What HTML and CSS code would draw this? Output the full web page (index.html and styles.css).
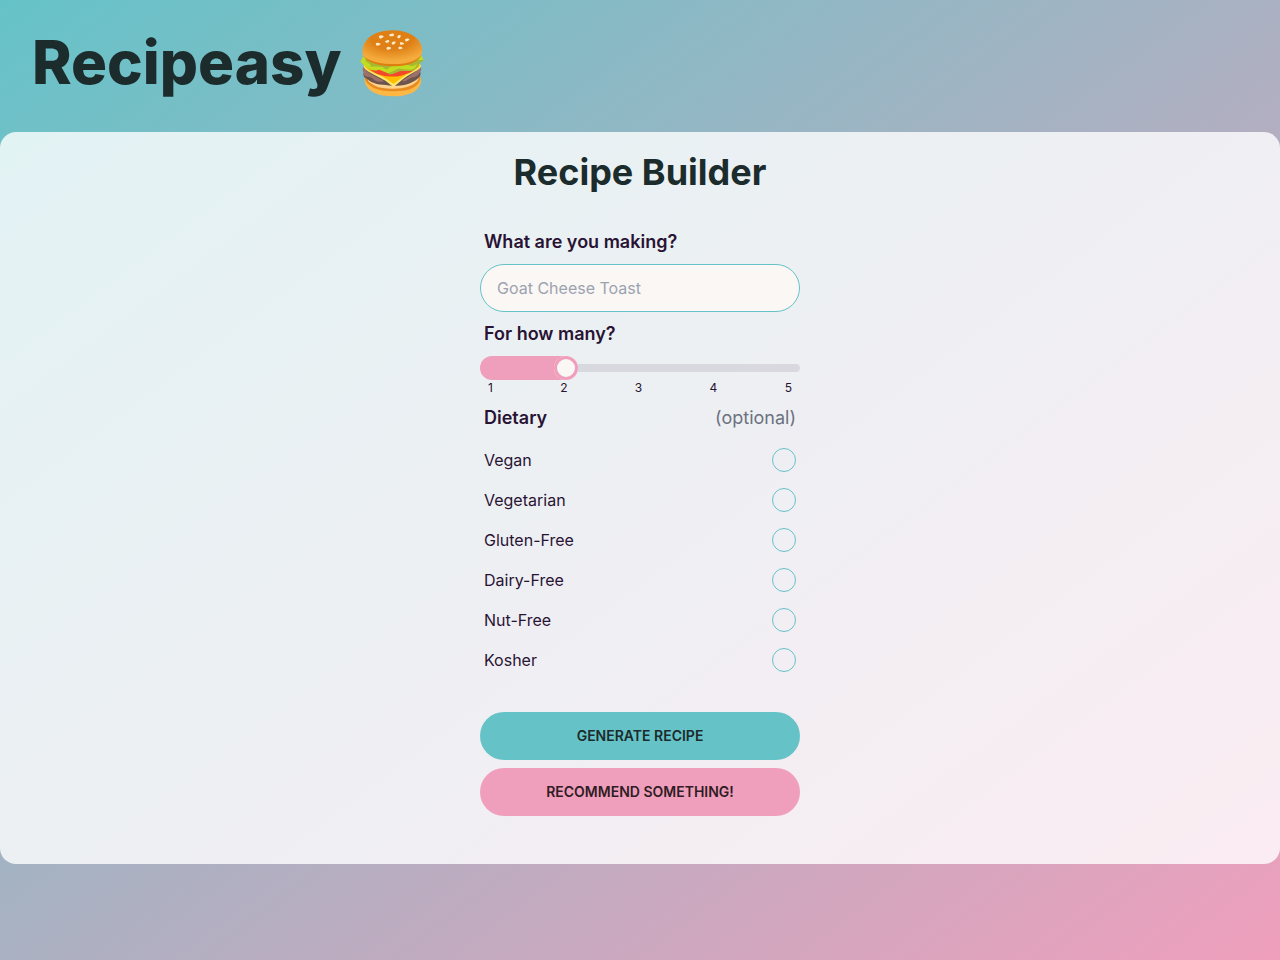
FILE: index.html
```
<!DOCTYPE html>
<html lang="en">
<head>
    <meta charset="UTF-8">
    <meta name="viewport" content="width=device-width, initial-scale=1.0">
    <title>Recipeasy</title>
    <link rel="stylesheet" href="styles.css">
</head>
<body>
<header class="site-header">
    <h1>Recipeasy 🍔</h1>
</header>

<main class="panel">
    <h2>Recipe Builder</h2>

    <form class="recipe-form">
        <label class="field-label" for="dish">What are you making?</label>
        <input class="text-input" type="text" id="dish" name="dish" placeholder="Goat Cheese Toast">

        <label class="field-label" for="servings">For how many?</label>
        <input class="range" type="range" id="servings" name="servings" min="1" max="5" value="2">
        <div class="ticks">
            <span>1</span>
            <span>2</span>
            <span>3</span>
            <span>4</span>
            <span>5</span>
        </div>

        <div class="field-label">
            <span>Dietary</span>
            <span class="optional">(optional)</span>
        </div>
        <label class="option">Vegan <input type="checkbox" name="diet" value="vegan"></label>
        <label class="option">Vegetarian <input type="checkbox" name="diet" value="vegetarian"></label>
        <label class="option">Gluten-Free <input type="checkbox" name="diet" value="gluten-free"></label>
        <label class="option">Dairy-Free <input type="checkbox" name="diet" value="dairy-free"></label>
        <label class="option">Nut-Free <input type="checkbox" name="diet" value="nut-free"></label>
        <label class="option">Kosher <input type="checkbox" name="diet" value="kosher"></label>

        <div class="actions">
            <button class="btn btn-primary" type="submit">Generate Recipe</button>
            <button class="btn btn-secondary" type="button">Recommend Something!</button>
        </div>
    </form>
</main>
</body>
</html>
```

FILE: styles.css
```
:root {
    --primary: #65c3c8;
    --secondary: #ef9fbc;
    --base: #faf7f5;
    --text: #291334;
    --heading: #1c2b2c;
    --muted: #6b7280;
}

* {
    margin: 0;
    padding: 0;
    box-sizing: border-box;
}

body {
    min-height: 100vh;
    font-family: Inter, sans-serif;
    font-size: 16px;
    line-height: 24px;
    color: var(--text);
    background: linear-gradient(to bottom right, var(--primary), var(--secondary));
}

.site-header {
    padding: 32px;
}

.site-header h1 {
    font-size: 60px;
    line-height: 60px;
    font-weight: 800;
    color: var(--heading);
    padding-bottom: 8px;
}

.panel {
    padding: 20px 16px 48px;
    border-radius: 16px;
    background: rgba(255, 255, 255, 0.8);
}

.panel h2 {
    margin-bottom: 32px;
    font-size: 36px;
    line-height: 40px;
    font-weight: 700;
    text-align: center;
    color: var(--heading);
}

.recipe-form {
    display: flex;
    flex-direction: column;
    max-width: 320px;
    margin: 0 auto;
}

.field-label {
    display: flex;
    justify-content: space-between;
    padding: 4px 4px 8px;
    font-size: 18px;
    line-height: 28px;
    font-weight: 600;
}

.optional {
    font-weight: 400;
    color: var(--muted);
}

.text-input {
    height: 48px;
    margin-bottom: 4px;
    padding: 0 16px;
    border: 1px solid var(--primary);
    border-radius: 24px;
    background: var(--base);
    font: inherit;
    color: var(--text);
}

.text-input::placeholder {
    color: #9ca3af;
}

.range {
    appearance: none;
    width: 100%;
    height: 24px;
    overflow: hidden;
    border-radius: 16px;
    background: transparent;
    cursor: pointer;
}

.range::-webkit-slider-runnable-track {
    height: 8px;
    border-radius: 16px;
    background: rgba(41, 19, 52, 0.1);
}

/* the wide shadow fills the track to the left of the thumb */
.range::-webkit-slider-thumb {
    appearance: none;
    position: relative;
    top: 50%;
    width: 24px;
    height: 24px;
    border-radius: 16px;
    background: var(--base);
    transform: translateY(-50%);
    box-shadow: 0 0 0 3px var(--secondary) inset, -320px 0 0 308px var(--secondary);
}

.ticks {
    display: flex;
    justify-content: space-between;
    margin-bottom: 4px;
    padding: 0 8px;
    font-size: 12px;
    line-height: 16px;
}

.option {
    display: flex;
    align-items: center;
    justify-content: space-between;
    padding: 8px 4px;
    cursor: pointer;
}

.option input {
    appearance: none;
    width: 24px;
    height: 24px;
    border: 1px solid var(--primary);
    border-radius: 50%;
    cursor: pointer;
}

.option input:checked {
    background: var(--primary);
    box-shadow: 0 0 0 4px var(--base) inset;
}

.actions {
    display: flex;
    flex-direction: column;
    gap: 8px;
    margin-top: 32px;
}

.btn {
    height: 48px;
    border: none;
    border-radius: 24px;
    font: inherit;
    font-size: 14px;
    font-weight: 600;
    text-transform: uppercase;
    cursor: pointer;
}

.btn-primary {
    background: var(--primary);
    color: #1c2b2c;
}

.btn-secondary {
    background: var(--secondary);
    color: #301c24;
}
```
